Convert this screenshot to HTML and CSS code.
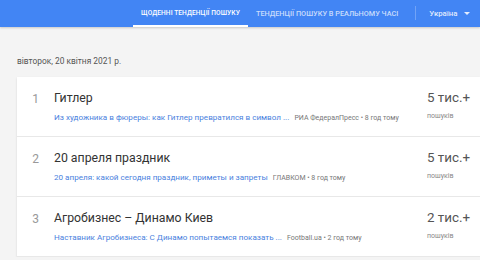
FILE: index.html
```html
<!DOCTYPE html>
<html lang="uk">
<head>
    <meta charset="UTF-8">
    <title>Google Trends - Щоденні тенденції пошуку</title>
    <link rel="stylesheet" href="styles.css">
</head>
<body>
    <header class="top-bar">
        <nav class="tabs">
            <a class="tab active">Щоденні тенденції пошуку</a>
            <a class="tab">Тенденції пошуку в реальному часі</a>
        </nav>
        <div class="divider"></div>
        <div class="country">Україна <span class="arrow"></span></div>
    </header>

    <main class="content">
        <div class="date">вівторок, 20 квітня 2021 р.</div>

        <div class="feed">
            <div class="item">
                <div class="index">1</div>
                <div class="details">
                    <div class="title">Гитлер</div>
                    <div class="summary">
                        <a class="article">Из художника в фюреры: как Гитлер превратился в символ ...</a>
                        <span class="source">РИА ФедералПресс • 8 год тому</span>
                    </div>
                </div>
                <div class="count">
                    <div class="count-value">5 тис.+</div>
                    <div class="count-label">пошуків</div>
                </div>
            </div>
            <div class="item">
                <div class="index">2</div>
                <div class="details">
                    <div class="title">20 апреля праздник</div>
                    <div class="summary">
                        <a class="article">20 апреля: какой сегодня праздник, приметы и запреты</a>
                        <span class="source">ГЛАВКОМ • 8 год тому</span>
                    </div>
                </div>
                <div class="count">
                    <div class="count-value">5 тис.+</div>
                    <div class="count-label">пошуків</div>
                </div>
            </div>
            <div class="item">
                <div class="index">3</div>
                <div class="details">
                    <div class="title">Агробизнес – Динамо Киев</div>
                    <div class="summary">
                        <a class="article">Наставник Агробизнеса: С Динамо попытаемся показать ...</a>
                        <span class="source">Football.ua • 2 год тому</span>
                    </div>
                </div>
                <div class="count">
                    <div class="count-value">2 тис.+</div>
                    <div class="count-label">пошуків</div>
                </div>
            </div>
        </div>
    </main>
</body>
</html>
```

FILE: styles.css
```css
body {
    margin: 0;
    font-family: Roboto, "Noto Sans", Arial, sans-serif;
    background: #f4f4f4;
    color: #333;
    overflow: hidden;
}
.top-bar {
    height: 27px;
    background: #4285f4;
    display: flex;
    align-items: stretch;
    padding-left: 133px;
    box-shadow: 0 1px 2px rgba(0, 0, 0, 0.18);
}
.tabs {
    display: flex;
}
.tab {
    display: flex;
    align-items: center;
    padding: 1px 8px 0;
    font-size: 7.3px;
    font-weight: 500;
    text-transform: uppercase;
    color: rgba(255, 255, 255, 0.72);
    border-bottom: 2px solid transparent;
}
.tab.active {
    font-size: 6.6px;
    letter-spacing: 0.1px;
    color: #fff;
    border-bottom-color: #fff;
}
.divider {
    width: 1px;
    background: rgba(255, 255, 255, 0.25);
    margin: 6px 0 7px 9px;
}
.country {
    display: flex;
    align-items: center;
    margin-left: 13px;
    font-size: 7.8px;
    font-weight: 500;
    color: rgba(255, 255, 255, 0.85);
}
.arrow {
    margin-left: 7px;
    border-left: 3px solid transparent;
    border-right: 3px solid transparent;
    border-top: 3px solid rgba(255, 255, 255, 0.85);
}
.content {
    padding: 29px 0 0 17px;
}
.date {
    font-size: 8.4px;
    color: #555;
    height: 21px;
}
.feed {
    background: #fff;
    box-shadow: 0 1px 2px rgba(0, 0, 0, 0.12);
}
.item {
    display: flex;
    height: 59px;
    border-bottom: 1px solid #e8e8e8;
}
.index {
    width: 37px;
    text-align: center;
    padding-top: 15px;
    font-size: 12px;
    color: #999;
}
.details {
    flex: 1;
    padding-top: 14px;
    min-width: 0;
}
.title {
    font-size: 12.3px;
    color: #333;
    height: 21px;
}
.summary {
    font-size: 8.1px;
    white-space: nowrap;
}
.article {
    color: #4a7fde;
    margin-right: 3px;
}
.source {
    color: #777;
    font-size: 7px;
}
.count {
    width: 53px;
    padding-top: 13px;
}
.count-value {
    font-size: 13.4px;
    color: #555;
    height: 22px;
}
.count-label {
    font-size: 7px;
    color: #888;
}
```
